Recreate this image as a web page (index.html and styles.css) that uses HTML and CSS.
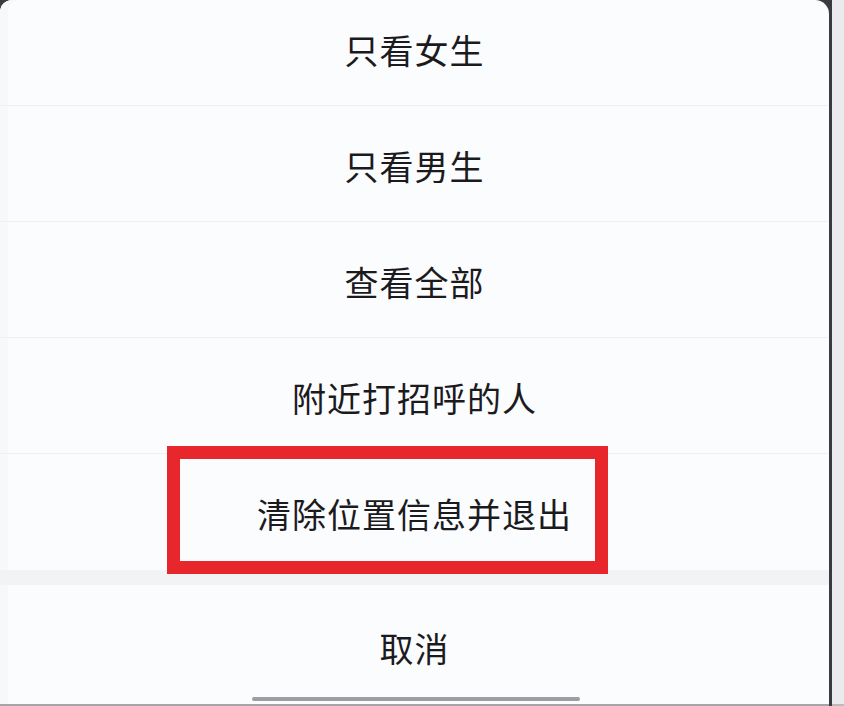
FILE: index.html
```html
<!DOCTYPE html>
<html lang="zh-CN">
<head>
<meta charset="utf-8">
<title>操作菜单</title>
<link rel="stylesheet" href="styles.css">
</head>
<body>
<div class="screen">
  <div class="frame">
    <div class="sheet">
      <ul class="menu">
        <li class="item first">只看女生</li>
        <li class="item">只看男生</li>
        <li class="item">查看全部</li>
        <li class="item">附近打招呼的人</li>
        <li class="item last">清除位置信息并退出<span class="highlight"></span></li>
      </ul>
      <div class="gap"></div>
      <div class="cancel">取消</div>
      <div class="home-bar"></div>
    </div>
  </div>
  <div class="edge"></div>
</div>
</body>
</html>
```

FILE: styles.css
```css
* { box-sizing: border-box; }
html, body { margin: 0; padding: 0; }
body {
  width: 844px;
  height: 706px;
  overflow: hidden;
  background: #fbfcfe;
  font-family: "Noto Sans CJK SC", "Noto Sans", sans-serif;
  color: #1b1b1e;
}
.screen {
  display: flex;
  width: 844px;
  height: 706px;
}
.frame {
  width: 832px;
  height: 706px;
  background: #3a3b40;
  padding-right: 3px;
}
.sheet {
  position: relative;
  width: 829px;
  height: 706px;
  background: #fbfcfe;
  border-top-left-radius: 12px;
  border-top-right-radius: 14px;
  border-bottom: 2px solid #a3a5ab;
  box-shadow: inset 8px 0 0 #f7f8fa;
  display: flex;
  flex-direction: column;
  overflow: hidden;
}
.edge {
  width: 12px;
  height: 706px;
  background: #eaebef;
  border-bottom: 2px solid #b9bbc0;
}
.menu {
  list-style: none;
  margin: -10px 0 0;
  padding: 0;
}
.item {
  position: relative;
  height: 116px;
  display: flex;
  align-items: center;
  justify-content: center;
  font-size: 34px;
  letter-spacing: 1px;
  padding-top: 3px;
  border-bottom: 1px solid #eff0f3;
}
.item.last {
  border-bottom: none;
}
.highlight {
  position: absolute;
  left: 167px;
  top: -8px;
  width: 441px;
  height: 128px;
  border: 13px solid #e8272c;
}
.gap {
  height: 15px;
  background: #f2f3f5;
}
.cancel {
  flex: 1;
  display: flex;
  align-items: center;
  justify-content: center;
  font-size: 34px;
  letter-spacing: 1px;
  padding-top: 5px;
}
.home-bar {
  position: absolute;
  left: 252px;
  bottom: 3px;
  width: 328px;
  height: 4px;
  border-radius: 2px;
  background: #9c9ea4;
}
```
